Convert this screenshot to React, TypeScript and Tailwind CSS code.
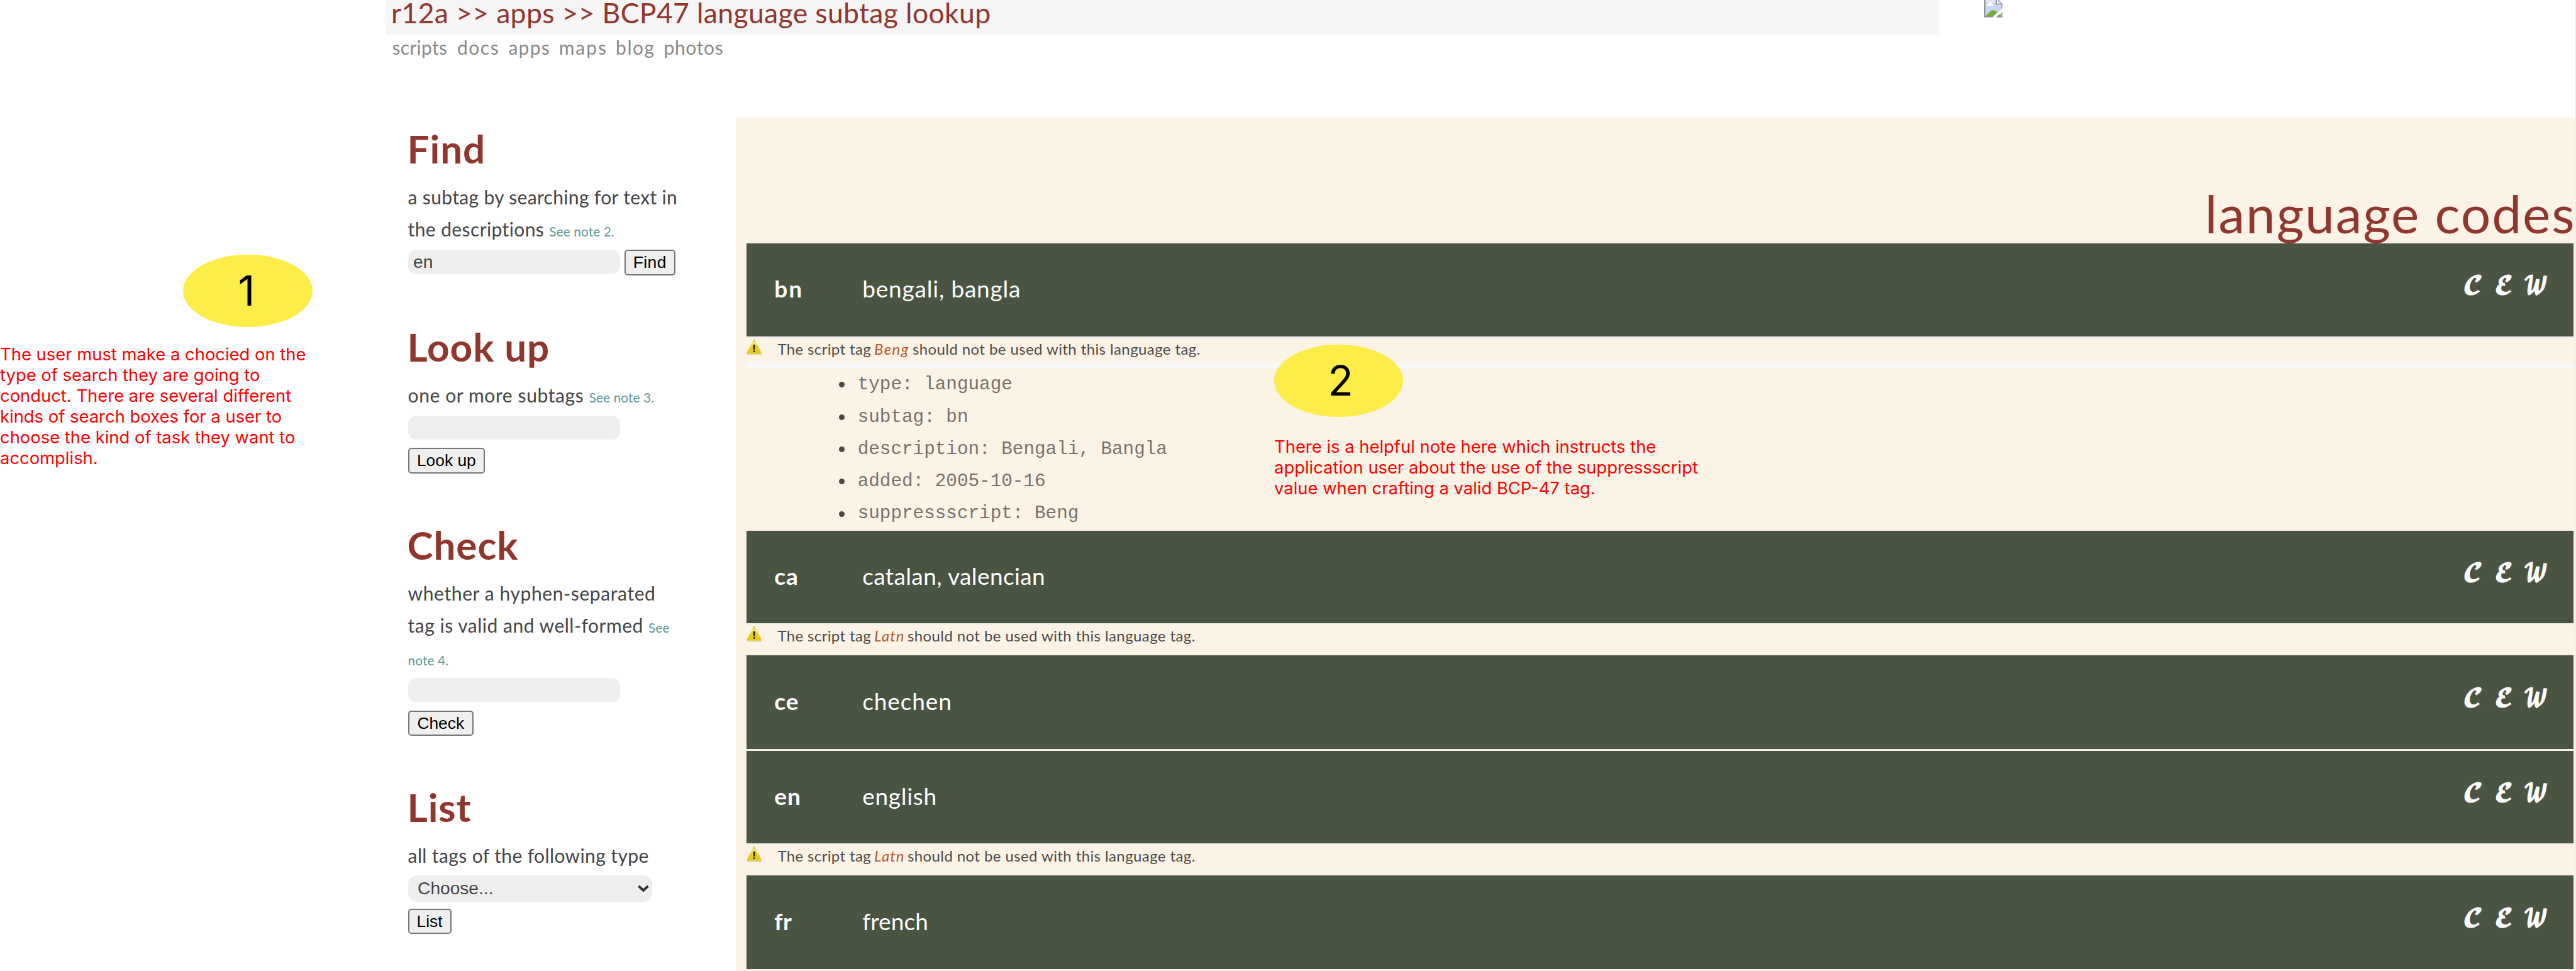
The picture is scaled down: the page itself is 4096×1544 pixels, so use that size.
import { Fragment, type ReactNode } from "react";

const navItems = [
  { label: "scripts", box: "w-[103.5px] tracking-[0.28px]" },
  { label: "docs", box: "w-[81.5px] tracking-[1.5px]" },
  { label: "apps", box: "w-[80.2px] tracking-[1.2px]" },
  { label: "maps", box: "w-[90.3px] tracking-[2px]" },
  { label: "blog", box: "w-[76.5px] tracking-[1.6px]" },
  { label: "photos", box: "tracking-[0.65px]" },
];

function BrokenImage() {
  return (
    <svg viewBox="0 0 16 15" className="block h-[27.5px] w-[29.3px]">
      <rect x="0" y="0" width="15.5" height="15" fill="#c9d5f4" />
      <rect x="1" y="0" width="9" height="2" fill="#dfe6fa" />
      <path d="M2 5 V4 L3.5 3 L4.5 2 H6.5 L8 5 Z" fill="#fff" />
      <path d="M1 14 L5.5 9.5 Q7.5 8.3 9.5 9.3 L11.5 10.5 L8 14 Z" fill="#76ac38" />
      <path d="M11.5 14 L13.5 12 L15 14 Z" fill="#76ac38" />
      <path d="M10 0 H16 V4 H10 Z" fill="#f4f6fd" />
      <path d="M10.5 0 V3.5 H15.5 V7" fill="none" stroke="#939393" strokeWidth="1" />
      <path d="M12 0 L15 3" stroke="#939393" strokeWidth="0.7" />
      <path d="M0.5 0 V14.5 H15.5 V10" fill="none" stroke="#8f8f8f" strokeWidth="1" />
      <path d="M16.2 7 L7 15.2 H10 L16.2 9.8 Z" fill="#fff" />
    </svg>
  );
}

function WarningIcon() {
  return (
    <svg viewBox="0 0 24 26" className="mt-[1.7px] block h-[26px] w-[24.3px] shrink-0">
      <defs>
        <linearGradient id="warn" x1="0" y1="0" x2="0" y2="1">
          <stop offset="0" stopColor="#e0c63c" />
          <stop offset="0.28" stopColor="#f3ea7c" />
          <stop offset="0.55" stopColor="#e6cd22" />
          <stop offset="1" stopColor="#e8c80c" />
        </linearGradient>
      </defs>
      <rect x="1" y="23" width="23" height="2.2" fill="#ddd3b0" />
      <path d="M12 0.6 Q12.8 0.6 13.4 2 L23.6 22 Q24 23.6 22.6 23.6 H1.2 Q0 23.6 0.4 22 L10.6 2 Q11.2 0.6 12 0.6 Z" fill="url(#warn)" />
      <path d="M10.4 9 H13.6 L12.9 17 H11.1 Z" fill="#1c1a06" />
      <rect x="10.8" y="18.4" width="2.4" height="2.6" fill="#1c1a06" />
    </svg>
  );
}

function Section({ title, children }: { title: string; children: ReactNode }) {
  return (
    <section className="mb-[69px]">
      <h2 className="mb-[11px] -ml-px h-[81px] text-[62px] leading-[82px] font-bold tracking-[0.9px] text-[#90362d]">{title}</h2>
      {children}
    </section>
  );
}

function Line({ children }: { children: ReactNode }) {
  return <div className="h-[51.3px] text-[30px] leading-[52.3px] whitespace-nowrap text-[#444]">{children}</div>;
}

function Controls({ children }: { children: ReactNode }) {
  return <div className="flex h-[51.3px] items-start gap-[7.4px] pt-[7.6px]">{children}</div>;
}

function Note({ children }: { children: ReactNode }) {
  return <span className="text-[20.8px] tracking-[0.1px] text-[#5c9a99]">{children}</span>;
}

function Field({ value = "" }: { value?: string }) {
  return (
    <div className="h-[38.5px] w-[337px] rounded-[13px] bg-[#eee] pl-[8.5px] font-['Liberation_Sans',sans-serif] text-[28.3px] leading-[39.5px] text-[#444]">
      {value}
    </div>
  );
}

function Button({ label, box }: { label: string; box: string }) {
  return (
    <button
      className={`h-[40.5px] rounded-[5px] border-2 border-[#767676] bg-[#efefef] text-center font-['Liberation_Sans',sans-serif] text-[26.4px] leading-[37px] text-black ${box}`}
    >
      {label}
    </button>
  );
}

type Entry = {
  code: string;
  name: string;
  height: string;
  codeTrack: string;
  nameTrack: string;
  script?: string;
  scriptBox?: string;
  details?: string[];
};

const entries: Entry[] = [
  {
    code: "bn",
    name: "bengali, bangla",
    height: "h-[148.4px]",
    codeTrack: "tracking-[2px]",
    nameTrack: "tracking-[0.8px]",
    script: "Beng",
    scriptBox: "w-[61px] tracking-[1.4px]",
    details: ["type: language", "subtag: bn", "description: Bengali, Bangla", "added: 2005-10-16", "suppressscript: Beng"],
  },
  {
    code: "ca",
    name: "catalan, valencian",
    height: "h-[146.5px]",
    codeTrack: "tracking-[1px]",
    nameTrack: "tracking-[0.4px]",
    script: "Latn",
    scriptBox: "w-[53px] tracking-[1px]",
  },
  { code: "ce", name: "chechen", height: "h-[148.5px]", codeTrack: "tracking-[1px]", nameTrack: "tracking-[0.9px]" },
  {
    code: "en",
    name: "english",
    height: "h-[146.5px]",
    codeTrack: "tracking-[1px]",
    nameTrack: "tracking-[0.7px]",
    script: "Latn",
    scriptBox: "w-[53px] tracking-[1px]",
  },
  { code: "fr", name: "french", height: "h-[148.4px]", codeTrack: "tracking-[0.5px]", nameTrack: "tracking-[0.1px]" },
];

function Bar({ entry }: { entry: Entry }) {
  return (
    <div className={`flex shrink-0 items-center bg-[#4a5443] pb-[3.5px] pl-11 text-[37px] leading-[48px] text-white ${entry.height}`}>
      <span className={`w-[140px] font-bold ${entry.codeTrack}`}>{entry.code}</span>
      <span className={`flex-1 ${entry.nameTrack}`}>{entry.name}</span>
      <span className="flex pb-1 font-['DejaVu_Math_TeX_Gyre','DejaVu_Serif','DejaVu_Sans',serif] text-[37px] leading-[48px] font-bold">
        <span className="w-[50px]">𝓒</span>
        <span className="w-[46px]">𝓔</span>
        <span className="w-[80px]">
          <span className="inline-block origin-left scale-x-[0.78]">𝓦</span>
        </span>
      </span>
    </div>
  );
}

function ScriptNote({ script, box }: { script: string; box: string }) {
  return (
    <div className="flex items-start text-2xl leading-9 whitespace-nowrap text-[#4d4a47]">
      <WarningIcon />
      <span className="ml-[25px] w-[153.5px] tracking-[0.36px]">The script tag</span>
      <em className={`text-[#b9562a] ${box}`}>{script}</em>
      <span className="tracking-[0.4px]">should not be used with this language tag.</span>
    </div>
  );
}

export default function App() {
  return (
    <div className="relative flex h-[1544px] w-[4096px] flex-col overflow-hidden border-r-2 border-[#eee] bg-white font-['Lato',sans-serif]">
      <header className="ml-[614px] flex h-[187px] shrink-0 items-start">
        <div className="w-[2469px]">
          <h1 className="h-[55px] bg-[#f5f5f5] pl-2 text-[44.5px] leading-[40px] tracking-[0.35px] whitespace-nowrap text-[#90362d]">
            r12a &gt;&gt; apps &gt;&gt; BCP47 language subtag lookup
          </h1>
          <nav className="flex pl-[9.5px] text-[30px] leading-[40px] text-[#888]">
            {navItems.map((item) => (
              <a key={item.label} className={item.box}>
                {item.label}
              </a>
            ))}
          </nav>
        </div>
        <div className="ml-[71.5px]">
          <BrokenImage />
        </div>
      </header>

      <div className="flex min-h-0 flex-1">
        <div className="w-[648.6px] shrink-0" />
        <aside className="w-[521.9px] shrink-0 pt-[8.2px]">
          <Section title="Find">
            <Line>
              <span className="tracking-[0.33px]">a subtag by searching for text in</span>
            </Line>
            <Line>
              <span className="tracking-[0.39px]">the descriptions </span>
              <Note>See note 2.</Note>
            </Line>
            <Controls>
              <Field value="en" />
              <Button label="Find" box="w-[80.6px] tracking-[0.4px]" />
            </Controls>
          </Section>
          <Section title="Look up">
            <Line>
              <span className="tracking-[0.6px]">one or more subtags </span>
              <Note>See note 3.</Note>
            </Line>
            <Controls>
              <Field />
            </Controls>
            <Controls>
              <Button label="Look up" box="w-[122.5px]" />
            </Controls>
          </Section>
          <Section title="Check">
            <Line>
              <span className="tracking-[0.6px]">whether a hyphen-separated</span>
            </Line>
            <Line>
              <span className="tracking-[0.5px]">tag is valid and well-formed </span>
              <Note>See</Note>
            </Line>
            <Line>
              <Note>note 4.</Note>
            </Line>
            <Controls>
              <Field />
            </Controls>
            <Controls>
              <Button label="Check" box="w-[104.4px]" />
            </Controls>
          </Section>
          <Section title="List">
            <Line>
              <span className="tracking-[0.38px]">all tags of the following type</span>
            </Line>
            <div className="h-[51.3px] pt-[6.7px]">
              <div className="flex h-[41.7px] w-[388.4px] items-center justify-between rounded-[14px] bg-[#eee] pr-[5px] pl-[15.5px] font-['Liberation_Sans',sans-serif] text-[28.1px] leading-[41.7px] text-[#444]">
                Choose...
                <svg viewBox="0 0 18 12" className="h-3 w-[18px]">
                  <path d="M1.5 2 L9 8.8 L16.5 2" fill="none" stroke="#333" strokeWidth="4" />
                </svg>
              </div>
            </div>
            <Controls>
              <Button label="List" box="w-[69px]" />
            </Controls>
          </Section>
        </aside>

        <main className="flex min-w-0 flex-1 flex-col bg-[#fbf3e6] pr-[1.7px] pl-[16.7px]">
          <div className="relative flex h-[195.5px] shrink-0 items-end justify-end pb-[3px]">
            <h2 className="-mr-[3px] text-[84px] leading-[82px] tracking-[1.8px] text-[#90362d]">language codes</h2>
          </div>
          <div className="mb-[2px] h-[2px] shrink-0 bg-[#efeeee]" />
          {entries.map((entry) => (
            <Fragment key={entry.code}>
              <Bar entry={entry} />
              <div className="h-[2px] shrink-0 bg-[#efeeee]" />
              {entry.script && entry.scriptBox ? (
                <div className={entry.details ? "h-[40.1px] shrink-0" : "h-[49.3px] shrink-0"}>
                  <ScriptNote script={entry.script} box={entry.scriptBox} />
                </div>
              ) : (
                <div className="h-[1.6px] shrink-0" />
              )}
              {entry.details && (
                <>
                  <div className="h-[9.3px] shrink-0 bg-[#f8f8f8]" />
                  <ul className="mb-[1.7px] shrink-0 pl-[147px] font-['Liberation_Mono',monospace] text-[29.3px] leading-[51.3px] text-[#77726c]">
                    {entry.details.map((detail) => (
                      <li key={detail} className="flex items-center whitespace-nowrap">
                        <span className="mr-[20.5px] size-[9px] rounded-full bg-[#4a4845]" />
                        {detail}
                      </li>
                    ))}
                  </ul>
                </>
              )}
            </Fragment>
          ))}
        </main>
      </div>

      {/* Reviewer callouts pinned over the page */}
      <div className="absolute top-[404.8px] left-[291.3px] flex h-[115.4px] w-[205.3px] justify-center rounded-[50%] bg-[#feec48] pr-1 font-['Inter',sans-serif] text-[66px] leading-[114px] text-black">
        1
      </div>
      <p className="absolute top-[547.2px] left-0 font-['Inter',sans-serif] text-[27.4px] leading-[32.9px] whitespace-nowrap text-[#f00]">
        The user must make a chocied on the
        <br />
        type of search they are going to
        <br />
        conduct. There are several different
        <br />
        kinds of search boxes for a user to
        <br />
        choose the kind of task they want to
        <br />
        accomplish.
      </p>
      <div className="absolute top-[547.7px] left-[2025.9px] flex h-[115.6px] w-[205.3px] justify-center rounded-[50%] bg-[#feec48] pl-1.5 font-['Inter',sans-serif] text-[66px] leading-[115px] text-black">
        2
      </div>
      <p className="absolute top-[694px] left-[2026px] font-['Inter',sans-serif] text-[27.4px] leading-[32.9px] whitespace-nowrap text-[#f00]">
        There is a helpful note here which instructs the
        <br />
        application user about the use of the suppressscript
        <br />
        value when crafting a valid BCP-47 tag.
      </p>
    </div>
  );
}
